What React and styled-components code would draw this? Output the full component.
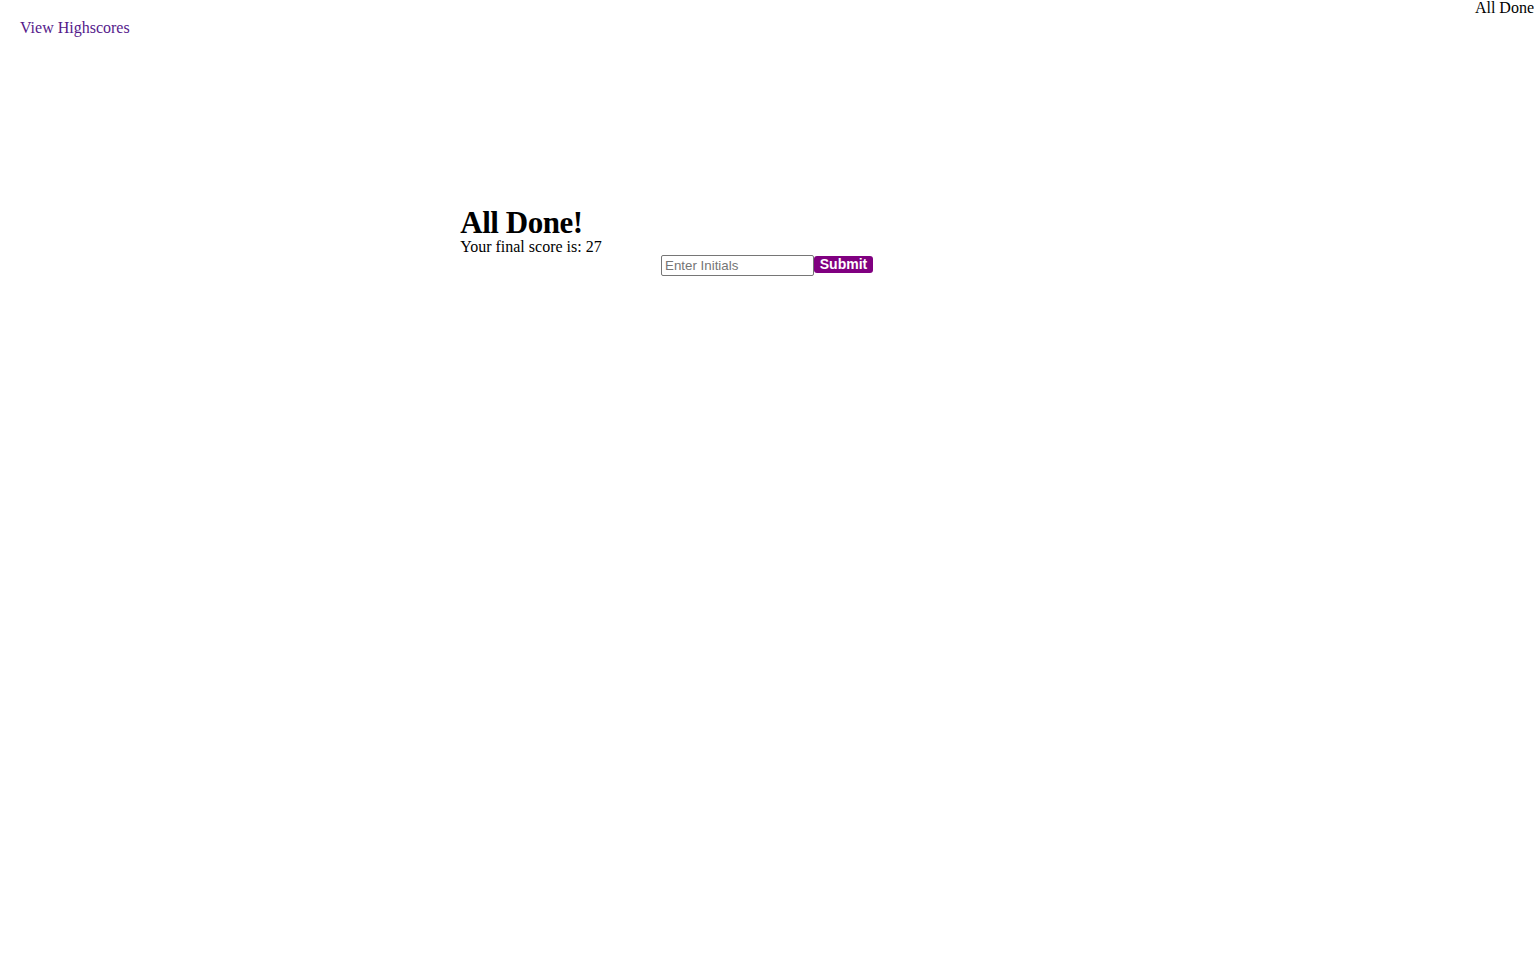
import React from "react";
import styled, { createGlobalStyle } from "styled-components";

const GlobalStyle = createGlobalStyle`
  body {
    margin: 0;
    font-family: "Liberation Serif", "Times New Roman", serif;
    font-size: 16px;
    color: #000;
    background: #fff;
  }
`;

const Timer = styled.div`
  text-align: right;
  line-height: 16px;
`;

const Header = styled.header`
  padding: 3px 20px 0;
`;

const ScoresLink = styled.a`
  color: #551a8b;
  text-decoration: none;
  cursor: pointer;
`;

const Main = styled.main`
  width: 40%;
  margin: 164px auto 0;
`;

const Title = styled.h1`
  font-size: 31px;
  letter-spacing: -0.45px;
  margin: 0;
  padding-top: 5px;
  line-height: 33px;
`;

const Score = styled.p`
  margin: 0;
  line-height: 16px;
`;

const Form = styled.form`
  display: flex;
  justify-content: center;
  align-items: flex-start;
`;

const Input = styled.input`
  font-family: "Liberation Sans", Arial, sans-serif;
  font-size: 13.33px;
  width: 153px;
  height: 21px;
  box-sizing: border-box;
  border: 1px solid #767676;
  border-radius: 2px;
  padding: 1px 3px;
  &::placeholder {
    color: #757575;
  }
`;

const Button = styled.button`
  font-family: "Liberation Sans", Arial, sans-serif;
  font-size: 14px;
  font-weight: bold;
  color: #fff;
  background: #800080;
  border: none;
  border-radius: 3px;
  width: 59px;
  height: 17px;
  margin-top: 1px;
  padding: 0;
  line-height: 17px;
  cursor: pointer;
`;

export default function App() {
  return (
    <>
      <GlobalStyle />
      <Timer>All Done</Timer>
      <Header>
        <ScoresLink href="#">View Highscores</ScoresLink>
      </Header>
      <Main>
        <Title>All Done!</Title>
        <Score>Your final score is: 27</Score>
        <Form onSubmit={(e) => e.preventDefault()}>
          <Input type="text" placeholder="Enter Initials" />
          <Button type="submit">Submit</Button>
        </Form>
      </Main>
    </>
  );
}
